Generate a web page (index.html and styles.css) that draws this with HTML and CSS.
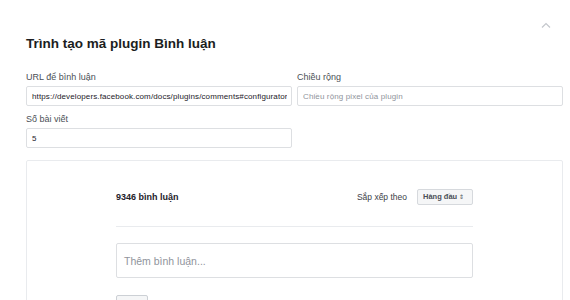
FILE: index.html
```html
<!DOCTYPE html>
<html lang="vi">
<head>
    <meta charset="UTF-8">
    <meta name="viewport" content="width=device-width, initial-scale=1.0">
    <link rel="stylesheet" href="styles.css">
    <title>Trình tạo mã plugin Bình luận</title>
</head>
<body>
    <div class="page">
        <div class="header">
            <h1>Trình tạo mã plugin Bình luận</h1>
            <svg class="chevron" width="10" height="6" viewBox="0 0 10 6">
                <path d="M1 5.5 L5 1.5 L9 5.5" fill="none" stroke="#c4c7cc" stroke-width="1.2"/>
            </svg>
        </div>

        <div class="fields">
            <div class="field">
                <label>URL để bình luận</label>
                <input type="text" value="https://developers.facebook.com/docs/plugins/comments#configurator">
            </div>
            <div class="field">
                <label>Chiều rộng</label>
                <input type="text" placeholder="Chiều rộng pixel của plugin">
            </div>
            <div class="field">
                <label>Số bài viết</label>
                <input type="text" value="5">
            </div>
        </div>

        <div class="preview">
            <div class="plugin">
                <div class="plugin-head">
                    <span class="count">9346 bình luận</span>
                    <div class="sort">
                        <span>Sắp xếp theo</span>
                        <button class="sort-btn">Hàng đầu <span class="arrows">&#8661;</span></button>
                    </div>
                </div>
                <div class="divider"></div>
                <div class="compose">Thêm bình luận...</div>
                <button class="post-btn"></button>
            </div>
        </div>
    </div>
</body>
</html>
```

FILE: styles.css
```css
body {
    margin: 0;
    background: #ffffff;
    font-family: "Liberation Sans", Arial, sans-serif;
    color: #1d2129;
    overflow: hidden;
}

.page {
    padding: 0 7px 0 26px;
}

.header {
    display: flex;
    justify-content: space-between;
    align-items: flex-start;
    padding-top: 20px;
}

h1 {
    margin: 15px 0 0;
    font-size: 13.5px;
    line-height: 17px;
    font-weight: bold;
    color: #1c1e21;
}

.chevron {
    margin: 2px 12px 0 0;
}

.fields {
    display: grid;
    grid-template-columns: 266px 266px;
    column-gap: 5px;
    row-gap: 8px;
    margin-top: 20px;
}

.field label {
    display: block;
    font-size: 9px;
    line-height: 11px;
    color: #4b4f56;
    margin-bottom: 3px;
}

.field input {
    display: block;
    width: 100%;
    height: 20px;
    box-sizing: border-box;
    border: 1px solid #dddfe2;
    border-radius: 2px;
    padding: 0 4px 0 5px;
    font-family: inherit;
    font-size: 8px;
    letter-spacing: 0.12px;
    color: #1d2129;
    outline: none;
}

.field input::placeholder {
    color: #90949c;
}

.preview {
    margin-top: 12px;
    height: 200px;
    border: 1px solid #e9ebee;
    border-radius: 2px;
}

.plugin {
    width: 357px;
    margin: 0 auto;
    padding-top: 27px;
}

.plugin-head {
    display: flex;
    justify-content: space-between;
    align-items: center;
    height: 17px;
}

.count {
    font-size: 9px;
    font-weight: bold;
    color: #1d2129;
}

.sort {
    display: flex;
    align-items: center;
    gap: 10px;
    font-size: 8.5px;
    color: #3d4148;
}

.sort-btn {
    height: 16px;
    width: 56px;
    padding: 0 5px;
    border: 1px solid #d6d9dd;
    border-radius: 2px;
    background: #f5f6f7;
    font-family: inherit;
    font-size: 7.5px;
    font-weight: bold;
    color: #4b4f56;
    text-align: left;
}

.arrows {
    font-size: 6px;
    font-weight: normal;
}

.divider {
    margin-top: 21px;
    border-top: 1px solid #e9ebee;
}

.compose {
    margin-top: 16px;
    height: 35px;
    box-sizing: border-box;
    border: 1px solid #dddfe2;
    border-radius: 2px;
    padding: 0 7px;
    display: flex;
    align-items: center;
    font-size: 10.5px;
    color: #90949c;
}

.post-btn {
    display: block;
    margin-top: 17px;
    width: 32px;
    height: 20px;
    border: 1px solid #ccd0d5;
    border-radius: 2px;
    background: #f5f6f7;
}
```
